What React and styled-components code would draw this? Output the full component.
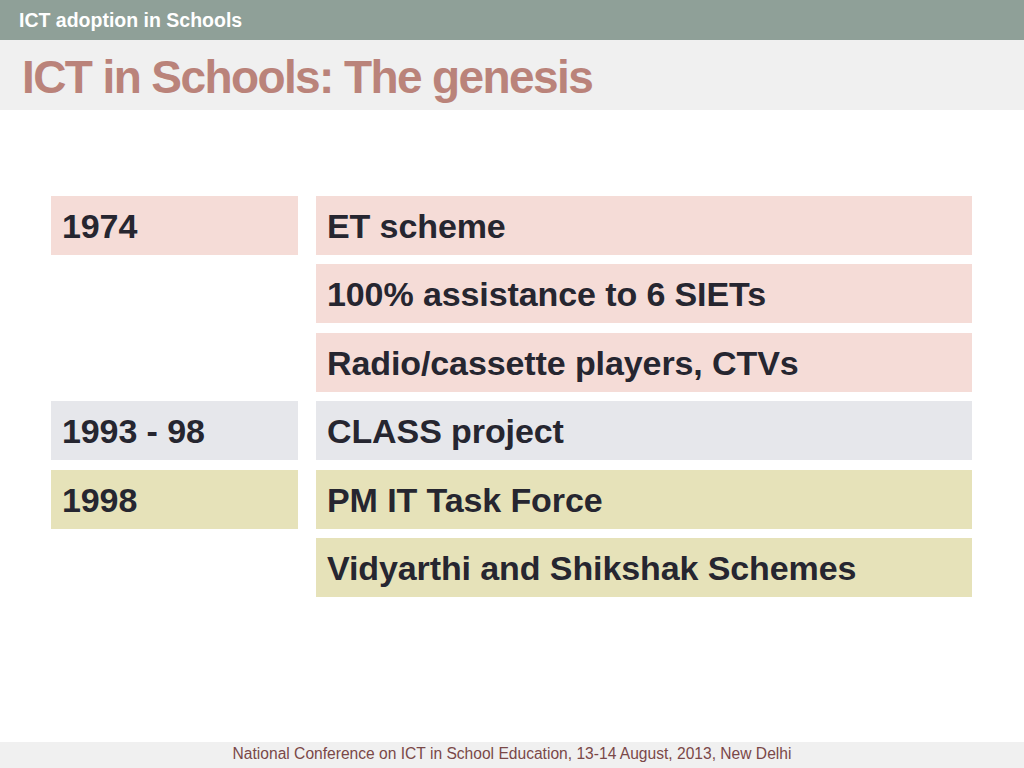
import styled, { createGlobalStyle } from 'styled-components';

const GlobalStyle = createGlobalStyle`
	html, body {
		margin: 0;
		padding: 0;
		background: #fff;
	}
	body {
		font-family: 'Liberation Sans', Arial, sans-serif;
	}
`;

const Slide = styled.div`
	width: 1024px;
	height: 768px;
	display: flex;
	flex-direction: column;
	background: #fff;
	overflow: hidden;
`;

const TopBar = styled.div`
	height: 40px;
	background: #8fa098;
	color: #fff;
	font-weight: bold;
	font-size: 19.5px;
	display: flex;
	align-items: center;
	padding: 1px 0 0 19px;
	box-sizing: border-box;
`;

const TitleBand = styled.div`
	height: 70px;
	background: #f0f0f0;
	display: flex;
	align-items: center;
	padding: 3px 0 0 22px;
	box-sizing: border-box;
`;

const Title = styled.h1`
	margin: 0;
	font-size: 46px;
	font-weight: bold;
	color: #ba837a;
	letter-spacing: -1.6px;
`;

const Body = styled.div`
	flex: 1;
	padding: 86px 0 0 51px;
`;

const Table = styled.div`
	display: grid;
	grid-template-columns: 247px 656px;
	grid-auto-rows: 59px;
	column-gap: 18px;
	row-gap: 9.4px;
`;

const tones = {
	pink: '#f5dcd7',
	grey: '#e6e7eb',
	olive: '#e6e2b9',
};

const Cell = styled.div`
	grid-column: ${(p) => p.$col};
	background: ${(p) => tones[p.$tone]};
	color: #262630;
	font-size: 34px;
	font-weight: bold;
	display: flex;
	align-items: center;
	padding: 2px 0 0 11px;
	letter-spacing: -0.1px;
`;

const Footer = styled.div`
	height: 26px;
	background: #f0f0f0;
	color: #7a4848;
	font-size: 15.6px;
	display: flex;
	align-items: center;
	justify-content: center;
	padding-bottom: 2px;
	box-sizing: border-box;
`;

const rows = [
	{ year: '1974', text: 'ET scheme', tone: 'pink' },
	{ text: '100% assistance to 6 SIETs', tone: 'pink' },
	{ text: 'Radio/cassette players, CTVs', tone: 'pink' },
	{ year: '1993 - 98', text: 'CLASS project', tone: 'grey' },
	{ year: '1998', text: 'PM IT Task Force', tone: 'olive' },
	{ text: 'Vidyarthi and Shikshak Schemes', tone: 'olive' },
];

const App = () => {
	return (
		<Slide>
			<GlobalStyle />
			<TopBar>ICT adoption in Schools</TopBar>
			<TitleBand>
				<Title>ICT in Schools: The genesis</Title>
			</TitleBand>
			<Body>
				<Table>
					{rows.map((row, index) => [
						row.year ? (
							<Cell key={`y${index}`} $col={1} $tone={row.tone}>
								{row.year}
							</Cell>
						) : null,
						<Cell key={`t${index}`} $col={2} $tone={row.tone}>
							{row.text}
						</Cell>,
					])}
				</Table>
			</Body>
			<Footer>National Conference on ICT in School Education, 13-14 August, 2013, New Delhi</Footer>
		</Slide>
	);
};

export default App;
